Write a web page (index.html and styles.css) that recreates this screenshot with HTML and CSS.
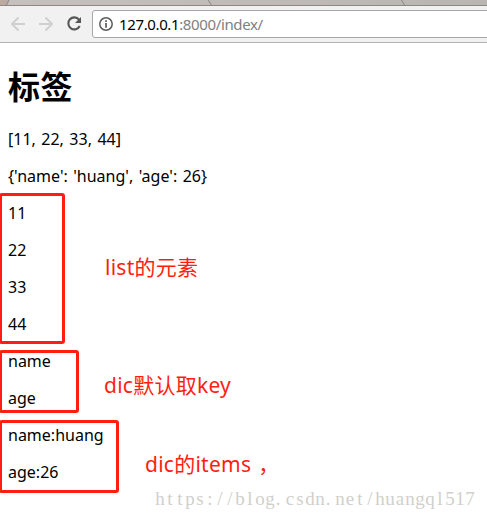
FILE: index.html
```html
<!DOCTYPE html>
<html lang="zh-CN">
<head>
<meta charset="utf-8">
<title>标签</title>
<link rel="stylesheet" href="styles.css">
</head>
<body>
<header class="browser">
  <div class="tabs">
    <svg width="487" height="6" viewBox="0 0 487 6"><path d="M0 0H9L6 5H0Z" fill="#bcaaa2"/><path d="M9 0L6.500 5" stroke="#8b8583" fill="none"/><path d="M208 0L211.500 5M401.500 0L404.500 5" stroke="#8b8784" fill="none"/></svg>
  </div>
  <div class="toolbar">
    <svg class="nav" width="84" height="36" viewBox="0 0 84 36" fill="none">
      <g stroke="#d0d0d0" stroke-width="2"><path d="M25 18H12M18.500 11.500L12 18L18.500 24.500"/><path d="M39 18H52M45.500 11.500L52 18L45.500 24.500"/></g>
      <path d="M79 13.600A6 6 0 1 0 79.700 20" stroke="#555" stroke-width="2.100"/><path d="M81 11V17H75Z" fill="#555"/>
    </svg>
    <div class="address">
      <svg width="14" height="14" viewBox="0 0 14 14"><circle cx="7" cy="7" r="6.200" fill="none" stroke="#5c5c5c" stroke-width="1.500"/><path d="M6.200 3.300h1.700v1.700H6.200zM6.200 6h1.700v4.700H6.200z" fill="#5c5c5c"/></svg>
      <span class="url">127.0.0.1<span class="path">:8000/index/</span></span>
    </div>
  </div>
</header>
<main>
  <h1>标签</h1>
  <p>[11, 22, 33, 44]</p>
  <p>{'name': 'huang', 'age': 26}</p>
  <p>11</p>
  <p>22</p>
  <p>33</p>
  <p>44</p>
  <p>name</p>
  <p>age</p>
  <p>name:huang</p>
  <p>age:26</p>
</main>
<div class="frame frame-list"></div>
<div class="frame frame-keys"></div>
<div class="frame frame-items"></div>
<div class="note note-list">list的元素</div>
<div class="note note-keys">dic默认取key</div>
<div class="note note-items">dic的items<span class="comma">，</span></div>
<svg class="watermark" width="324" height="28" viewBox="0 0 324 28"><text y="19" x="5 15 25 35 45 55 65 75 85 95 105 115 123 135 145 155 165 173 185 195 205 215 225 235 245 255 265 275 285 295 305 315">https://blog.csdn.net/huangql517</text></svg>
</body>
</html>
```
FILE: styles.css
```css
body {
  margin: 0;
  height: 519px;
  position: relative;
  overflow: hidden;
  background: #fff;
  color: #000;
  font: 16px/21px "Noto Sans", "Noto Sans CJK SC", sans-serif;
}
.browser { height: 43px; }
.tabs {
  height: 6px;
  box-sizing: border-box;
  border-bottom: 1px solid #8d8886;
  background: linear-gradient(90deg, #c6c1bc, #b9b5b0);
}
.tabs svg { display: block; }
.toolbar {
  display: flex;
  height: 37px;
  box-sizing: border-box;
  border-bottom: 1px solid #b3b1b1;
  background: #f2f1f2;
}
.nav { flex: none; }
.address {
  display: flex;
  align-items: center;
  flex: none;
  box-sizing: border-box;
  width: 405px;
  height: 28px;
  margin: 4px 0 0 8px;
  padding-left: 6px;
  gap: 6px;
  border: 1px solid #a9a7a7;
  border-radius: 3px;
  background: #fff;
}
.url { font-size: 15px; letter-spacing: -.37px; }
.path { color: #808080; }
main { padding: 0 8px; }
h1 {
  margin: 21px 0 23px;
  font: bold 32px/42px "Noto Sans CJK SC", sans-serif;
  letter-spacing: .5px;
}
p { margin: 0 0 16px; word-spacing: 1.3px; }
.frame {
  position: absolute;
  left: -1px;
  box-sizing: border-box;
  border: 3px solid #ff1e10;
  border-radius: 3px;
}
.frame-list { top: 193px; width: 66px; height: 151px; }
.frame-keys { top: 350px; width: 80px; height: 63px; }
.frame-items { top: 420px; width: 120px; height: 73px; }
.note {
  position: absolute;
  color: #ff1e10;
  font-size: 21px;
  line-height: 30px;
  letter-spacing: .25px;
  white-space: nowrap;
}
.note-list { left: 105px; top: 252px; }
.note-keys { left: 104px; top: 370px; }
.note-items { left: 145px; top: 449px; }
.comma { margin-left: 7px; }
.watermark { position: absolute; left: 155px; top: 486px; }
.watermark text {
  font: 19px "Liberation Serif", serif;
  text-anchor: middle;
  fill: #d0d0cb;
}
```
